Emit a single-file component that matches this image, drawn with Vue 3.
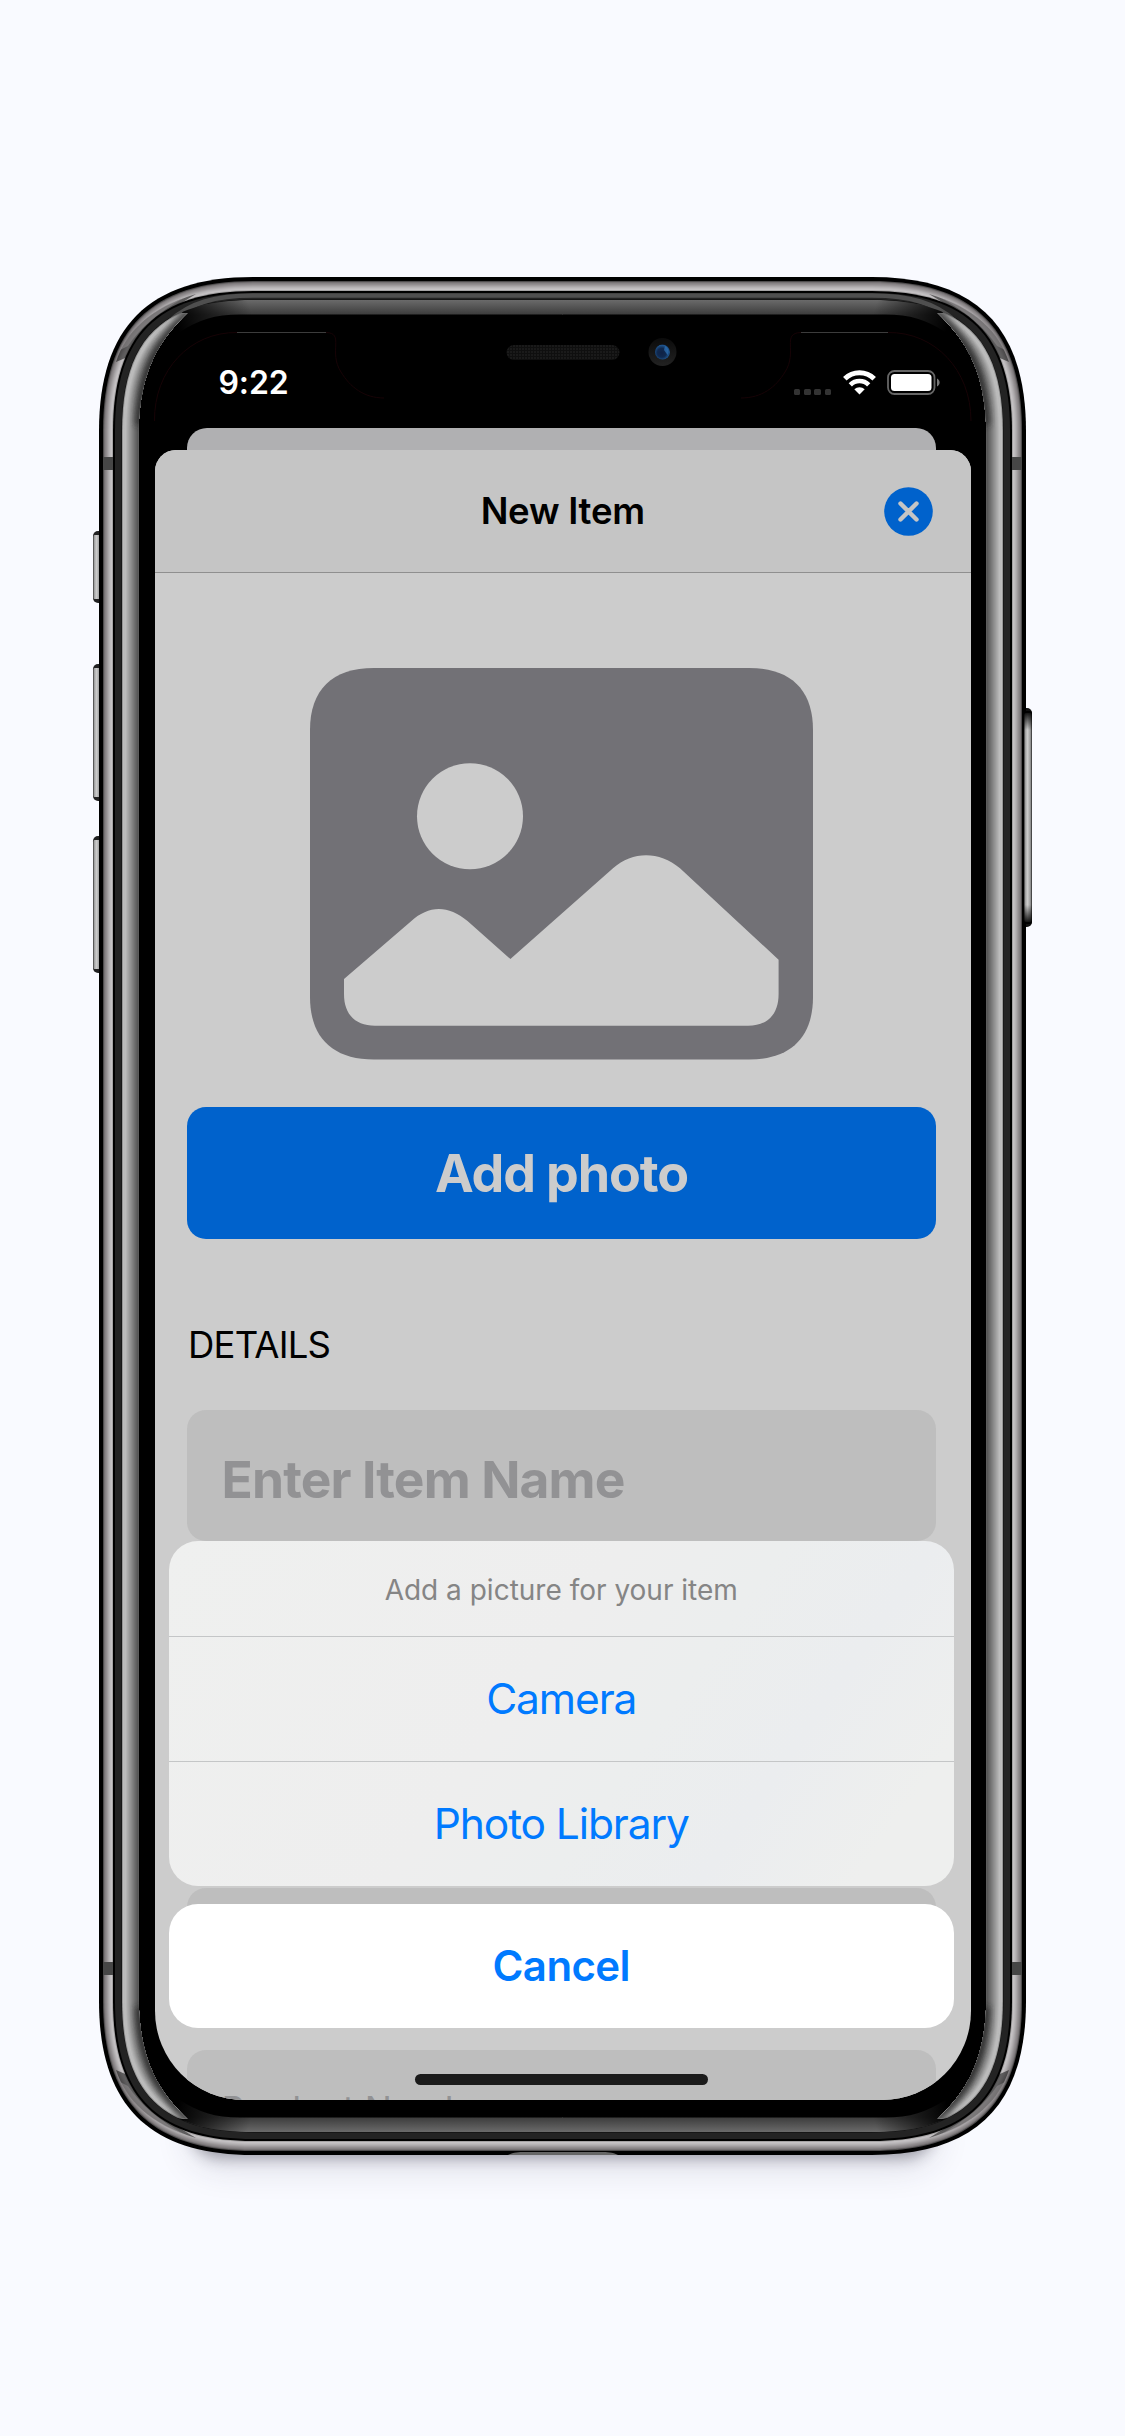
<script setup>
// Rounded device outline with continuous corners, inset from the outer edge.
const ringPath = (d) => {
  const l = 99 + d, t = 277 + d, r = 1026 - d, b = 2155 - d
  const R = 154 - d
  const c = 50 - 0.448 * d
  return `M${l + R} ${t}H${r - R}C${r - c} ${t} ${r} ${t + c} ${r} ${t + R}V${b - R}` +
    `C${r} ${b - c} ${r - c} ${b} ${r - R} ${b}H${l + R}C${l + c} ${b} ${l} ${b - c} ${l} ${b - R}` +
    `V${t + R}C${l} ${t + c} ${l + c} ${t} ${l + R} ${t}Z`
}

const body = [
  [0, '#000'],
  [4, '#4f4d4e'], [5, '#777375'], [6, '#878385'], [7, '#928e90'], [8, '#9f9b9d'],
  [9, '#aba8aa'], [10, '#b6b3b5'], [11, '#bfbcbe'], [12, '#c6c3c5'], [13, '#a5a3a4'],
]
const bezel = [[14, '#000'], [16, '#232323'], [22.6, '#0b0b0b'], [23.4, '#000']]
const glassSide = Array.from({ length: 16 }, (_, i) => {
  const v = i === 0 ? 150 : i < 3 ? 192 - i * 3 : Math.round(188 - (i - 3) * 8.4)
  return [23 + i, `rgb(${v},${v},${v})`]
})

const corners = [
  'translate(0 0)',
  'translate(1125 0) scale(-1 1)',
  'translate(0 2432) scale(1 -1)',
  'translate(1125 2432) scale(-1 -1)',
]
const keysLeft = [[531, 72], [664, 137], [836, 137]]
const actions = ['Camera', 'Photo Library']
</script>

<template>
  <main class="stage">
    <div class="shadow"></div>
    <svg class="device" viewBox="0 0 1125 2436" aria-hidden="true">
      <defs>
        <linearGradient id="key" x1="0" x2="1" y1="0" y2="0">
          <stop offset="0" stop-color="#333" />
          <stop offset=".2" stop-color="#aaa" />
          <stop offset=".45" stop-color="#ccc" />
          <stop offset=".8" stop-color="#999" />
          <stop offset="1" stop-color="#222" />
        </linearGradient>
        <linearGradient id="keyEnds" x1="0" x2="0" y1="0" y2="1">
          <stop offset="0" stop-color="#000" />
          <stop offset=".09" stop-color="#000" stop-opacity="0" />
          <stop offset=".91" stop-color="#000" stop-opacity="0" />
          <stop offset="1" stop-color="#000" />
        </linearGradient>
        <linearGradient id="band" gradientUnits="userSpaceOnUse" x1="0" x2="0" y1="300" y2="315">
          <stop offset="0" stop-color="#6a6a6a" />
          <stop offset="1" stop-color="#3b3b3b" />
        </linearGradient>
        <linearGradient id="bandFade" gradientUnits="userSpaceOnUse" x1="178" x2="250" y1="328" y2="308">
          <stop offset="0" stop-color="#000" />
          <stop offset="1" stop-color="#000" stop-opacity="0" />
        </linearGradient>
        <radialGradient id="lens" cx=".45" cy=".55" r=".6">
          <stop offset="0" stop-color="#0e2145" />
          <stop offset=".5" stop-color="#10294f" />
          <stop offset=".85" stop-color="#1f5690" />
          <stop offset="1" stop-color="#0c1f3c" />
        </radialGradient>
        <linearGradient id="lensRing" x1="0" x2="0" y1="0" y2="1">
          <stop offset="0" stop-color="#0b0b0b" />
          <stop offset="1" stop-color="#222" />
        </linearGradient>
        <pattern id="mesh" width="3" height="3" patternUnits="userSpaceOnUse">
          <rect width="3" height="3" fill="#0f0f0f" />
          <rect width="2" height="2" fill="#1a1a1a" />
        </pattern>
        <filter id="soft" x="-20%" y="-20%" width="140%" height="140%">
          <feGaussianBlur stdDeviation="3" />
        </filter>
        <clipPath id="crescent">
          <path d="M100 1216V435C100 350 140 314 187.500 313C163 337 139 366 138.600 435V1216Z" />
        </clipPath>
        <clipPath id="silver"><path :d="ringPath(4.500)" /></clipPath>
        <clipPath id="inner"><path :d="ringPath(23)" /></clipPath>
      </defs>

      <g v-for="k in keysLeft" :key="k[0]">
        <rect x="93" :y="k[0]" width="12" :height="k[1]" rx="5" fill="#222" />
        <rect x="93" :y="k[0] + 4" width="8" :height="k[1] - 8" rx="1.500" fill="url(#key)" />
      </g>
      <rect x="1018" y="708" width="14" height="219" rx="5" fill="#111" />

      <path v-for="r in body" :key="r[0]" :d="ringPath(r[0])" :fill="r[1]" />
      <g fill="#464646">
        <rect x="103" y="457" width="10" height="13" />
        <rect x="1012" y="457" width="10" height="13" />
        <rect x="103" y="1962" width="10" height="13" />
        <rect x="1012" y="1962" width="10" height="13" />
      </g>
      <g v-for="c in corners" :key="'s' + c" :transform="c" clip-path="url(#silver)">
        <path d="M116 362C126 332 150 308 196 294C170 309 142 330 130 356Z" fill="#1d1d1d" opacity=".6" />
        <path d="M120 350C132 328 156 306 184 298C160 311 140 328 128 346Z" fill="#8d8a8c" opacity=".6" />
      </g>
      <path v-for="r in bezel" :key="'b' + r[0]" :d="ringPath(r[0])" :fill="r[1]" />
      <path d="M170 321C190 303 215 295.500 253 295.500H872C910 295.500 935 303 955 321" fill="none" stroke="#4f4f4f" stroke-width="4.500" />

      <g v-for="c in corners" :key="'c' + c" :transform="c">
        <g clip-path="url(#inner)">
          <path d="M174 326L190 302L253 299.500H563V314.500H240C215 314.500 198 320 180 332Z" fill="url(#band)" />
          <path d="M170 332L190 300H260V336H170Z" fill="url(#bandFade)" />
        </g>
        <g clip-path="url(#crescent)">
          <path v-for="r in glassSide" :key="r[0]" :d="ringPath(r[0])" :fill="r[1]" />
          <path d="M190 310C165 336 143 362 140 425" fill="none" stroke="#2a2a2a" stroke-width="10" opacity=".8" filter="url(#soft)" />
        </g>
      </g>

      <rect x="1024" y="713" width="8" height="209" rx="2" fill="url(#key)" />
      <rect x="1024" y="711" width="8" height="213" rx="2" fill="url(#keyEnds)" />
      <path d="M508 2155C514 2152 518 2152 526 2152H600C608 2152 612 2152 618 2155Z" fill="#666" />

      <path d="M237 332.500H326M801 332.500H888" stroke="#3c3c3c" />
      <path d="M154.500 421C154 370 190 332 237 332.500M326 332.500C345 333 328 352 341 372C350 387 364 398 384 398M888 332.500C935 332 971 370 971 421M801 332.500C781 333 798 352 785 372C776 387 762 398 741 398" fill="none" stroke="#170306" />
      <rect x="506.500" y="345" width="113" height="15" rx="7.500" fill="url(#mesh)" />
      <circle cx="662.500" cy="352" r="14" fill="url(#lensRing)" />
      <circle cx="662.500" cy="352" r="7.500" fill="url(#lens)" />
      <path d="M665 346C668.500 348 669.500 352 667.500 355L664 350Z" fill="#2f74b8" opacity=".7" />
    </svg>

    <section class="screen">
      <div class="status">
        <span class="time">9:22</span>
        <div class="indicators">
          <i v-for="n in 4" :key="n" class="dot"></i>
          <svg class="wifi" width="33" height="25" viewBox="0 0 33 25" fill="none" stroke="#fff">
            <path d="M1.800 8.700A21 21 0 0 1 31.200 8.700" stroke-width="5" />
            <path d="M7.300 14.800A13 13 0 0 1 25.700 14.800" stroke-width="4.600" />
            <path d="M16.500 24.500L11.300 19.300A7.500 7.500 0 0 1 21.700 19.300Z" fill="#fff" stroke="none" />
          </svg>
          <svg class="battery" width="54" height="25" viewBox="0 0 54 25">
            <rect x="1" y="1" width="46.500" height="23" rx="6.500" fill="none" stroke="#666" stroke-width="1.800" />
            <rect x="4" y="4" width="40.500" height="17" rx="3.500" fill="#fff" />
            <path d="M50 8.500C53.500 10 53.500 15 50 16.500Z" fill="#777" />
          </svg>
        </div>
      </div>
      <div class="back-card"></div>
      <div class="sheet">
        <header class="bar">
          <h1>New Item</h1>
          <svg class="close" width="49" height="49" viewBox="0 0 49 49">
            <circle cx="24.500" cy="24.500" r="24.300" fill="#0062cc" />
            <path d="M16.500 16.500L32.500 32.500M32.500 16.500L16.500 32.500" stroke="#c5c5c5" stroke-width="4.400" stroke-linecap="round" />
          </svg>
        </header>
        <div class="form">
          <svg class="photo" width="503" height="392" viewBox="310 668 503 392">
            <path d="M310 730C310 690 332 668 374 668H749C791 668 813 690 813 730V997C813 1037 791 1059.500 749 1059.500H374C332 1059.500 310 1037 310 997Z" fill="#727176" />
            <circle cx="470" cy="816.300" r="53" fill="#ccc" />
            <path d="M344 979L410.500 921.700C429 905 448 905 467.500 921L510.400 959L613 868.300C633 851 659 851 680 868.300L778.600 959.700V994C778.600 1014 768 1025.700 748 1025.700H375C355 1025.700 344 1014 344 994Z" fill="#ccc" />
          </svg>
          <button class="add">Add photo</button>
          <h2>DETAILS</h2>
          <div class="field name">Enter Item Name</div>
          <div class="field later"></div>
          <div class="field number">Product Number</div>
        </div>
      </div>

      <div class="action-sheet">
        <div class="group">
          <p>Add a picture for your item</p>
          <button v-for="a in actions" :key="a">{{ a }}</button>
        </div>
        <button class="cancel">Cancel</button>
      </div>
      <div class="home"></div>
    </section>
  </main>
</template>

<style>
body { margin: 0; background: #f9faff; }
</style>

<style scoped>
.stage {
  display: grid;
  width: 1125px;
  height: 2436px;
  overflow: hidden;
  background: #f9faff;
  font-family: Inter, "Liberation Sans", sans-serif;
}
.stage > * { grid-area: 1 / 1; }
.device { width: 1125px; height: 2436px; }
.shadow {
  align-self: start;
  width: 745px;
  height: 60px;
  margin: 2091px 0 0 190px;
  border-radius: 40px;
  box-shadow: 0 7px 14px rgba(30, 25, 40, .34), 0 14px 36px rgba(40, 40, 70, .16);
}
.screen {
  position: relative;
  width: 815.5px;
  height: 1767.5px;
  margin: 332px 0 0 155px;
  overflow: hidden;
  border-radius: 0 0 89px 89px;
}
button { border: 0; padding: 0; font-family: inherit; }
h1, h2, p { margin: 0; }
.status {
  display: flex;
  justify-content: space-between;
  height: 96px;
  padding: 0 30px 0 63.5px;
  color: #fff;
}
.time { margin-top: 31px; font-size: 32px; line-height: 40px; font-weight: 600; letter-spacing: -.1px; }
.indicators { display: flex; height: 25px; margin-top: 38px; }
.dot { align-self: flex-end; width: 6.5px; height: 6.5px; margin-right: 3.8px; border-radius: 1.5px; background: #333; }
.wifi { margin: 0 11px 0 7.5px; }
.back-card { height: 22px; margin: 0 34.5px 0 32px; border-radius: 20px 20px 0 0; background: #b0b0b2; }
.sheet { height: 1649.5px; border-radius: 21px 21px 0 0; background: #ccc; overflow: hidden; }
.bar {
  display: grid;
  grid-template-columns: 49px 1fr 49px;
  align-items: center;
  box-sizing: border-box;
  height: 123px;
  padding: 0 37.5px;
  border-bottom: 1px solid #8f8f8f;
  background: #c5c5c5;
}
.bar h1 { grid-column: 2; font-size: 36.5px; line-height: 44px; font-weight: 600; letter-spacing: -.25px; text-align: center; color: #000; }
.close { display: block; margin-top: 1px; }
.form { display: flex; flex-direction: column; padding: 0 34.5px 0 32px; }
.photo { align-self: center; margin-top: 95px; }
.add {
  height: 131.5px;
  margin-top: 47px;
  padding-top: 2px;
  border-radius: 19px;
  background: #0062cc;
  color: #ccc;
  font-size: 52px;
  font-weight: 700;
  letter-spacing: -1.1px;
}
.form h2 { margin-top: 86px; padding-left: 1px; font-size: 36.5px; line-height: 40px; font-weight: 400; letter-spacing: -.8px; color: #000; }
.field {
  box-sizing: border-box;
  height: 131.5px;
  padding-left: 34.5px;
  border-radius: 19px;
  background: #bebebe;
  color: #929294;
  line-height: 138px;
}
.name { margin-top: 45px; font-size: 51.5px; font-weight: 700; letter-spacing: -.85px; }
.later { margin-top: 347px; }
.number { margin-top: 30.5px; font-size: 36px; line-height: 118px; }
.action-sheet {
  position: absolute;
  left: 14px;
  bottom: 71.5px;
  display: flex;
  flex-direction: column;
  gap: 18px;
  width: 784.5px;
}
.group {
  display: flex;
  flex-direction: column;
  height: 345px;
  overflow: hidden;
  border-radius: 29px;
  background: linear-gradient(125deg, #eff0ef 0%, #eee 45%, #eceeee 60%, #ebedef 75%, #eeefee 90%);
}
.group p { height: 95px; font-size: 28px; line-height: 98px; text-align: center; color: #858585; }
.group button {
  height: 125px;
  border-top: 1px solid #c4c6c7;
  background: transparent;
  color: #007aff;
  font-size: 42.5px;
  font-weight: 400;
  letter-spacing: -1.1px;
}
.cancel {
  height: 124.5px;
  border-radius: 29px;
  background: #fff;
  color: #007aff;
  font-size: 42px;
  font-weight: 600;
  letter-spacing: -.6px;
}
.home {
  position: absolute;
  left: 260px;
  bottom: 15px;
  width: 293px;
  height: 10.5px;
  border-radius: 6px;
  background: #1b1b1b;
}
</style>
